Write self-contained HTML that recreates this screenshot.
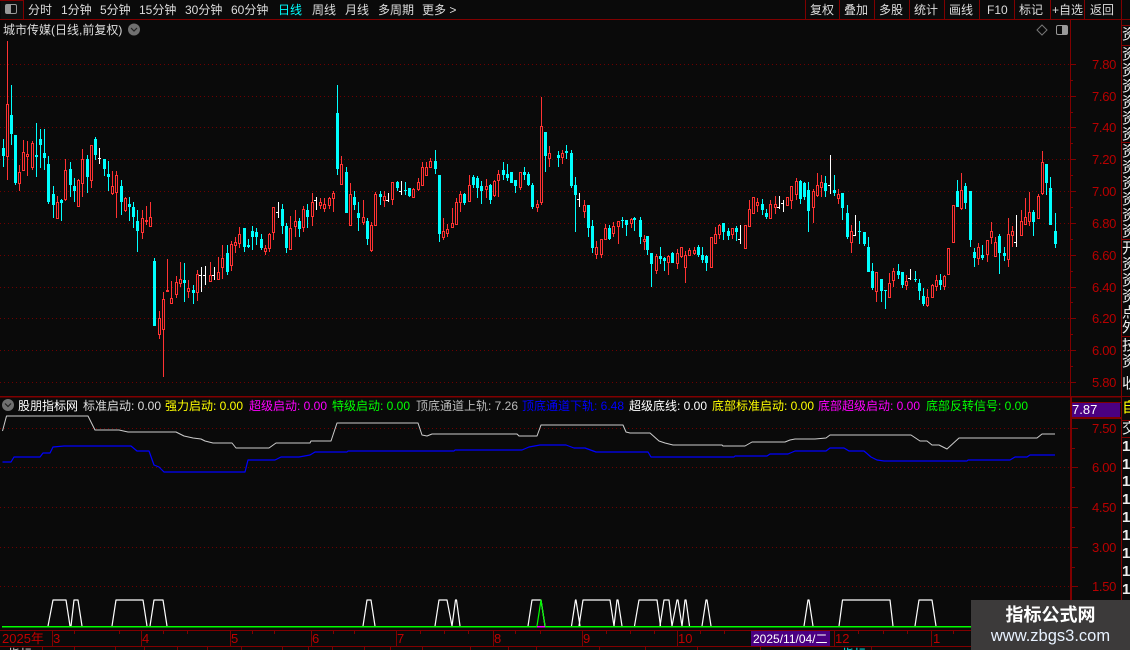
<!DOCTYPE html>
<html lang="zh-CN"><head><meta charset="utf-8"><title>城市传媒</title>
<style>
html,body{margin:0;padding:0;background:#0a0a0a}
#p{position:relative;width:1130px;height:650px;overflow:hidden;background:#0a0a0a;font:12px/14px "Liberation Sans","WenQuanYi Zen Hei","Noto Sans CJK SC",sans-serif;color:#ddd}
#p span{position:absolute;white-space:nowrap}
svg{position:absolute;left:0;top:0}
.n{top:3px;color:#ddd;font-size:12px}
.a{left:1092px;color:#b80000;font-size:13px;letter-spacing:-.3px}
.h{top:399px;font-size:12px}
.t{top:632px;color:#c00000;font-size:13px}
.s{left:1122px;color:#eee;font-size:15px;width:8px;overflow:hidden;height:16px;line-height:16px}
</style></head><body><div id="p">
<svg width="1130" height="650" viewBox="0 0 1130 650" shape-rendering="crispEdges" fill="none">
<g stroke="#6e0000" stroke-dasharray="1 3">
<path d="M0 64.5H1070M0 96.5H1070M0 127.5H1070M0 159.5H1070M0 191.5H1070M0 223.5H1070M0 255.5H1070M0 287.5H1070M0 318.5H1070M0 350.5H1070M0 382.5H1070M0 428.5H1070M0 467.5H1070M0 507.5H1070M0 547.5H1070M0 586.5H1070"/>
</g>
<path stroke="#0ff" d="M3.5 139V167M11.5 85V145M15.5 135V185M36.5 123V177M40.5 129V168M44.5 129V170M48.5 156V204M53.5 186V218M61.5 199V221M70.5 162V197M74.5 178V202M87.5 155V193M95.5 137V160M104.5 159V176M108.5 161V191M121.5 180V215M129.5 197V221M133.5 202V228M137.5 210V252M154.5 258V326M184.5 263V302M193.5 285V304M227.5 245V275M244.5 228V252M248.5 239V248M252.5 226V250M256.5 228V245M261.5 234V250M282.5 204V234M286.5 223V253M299.5 218V237M307.5 204V228M337.5 85V175M346.5 167V213M354.5 191V210M358.5 202V231M367.5 218V245M380.5 191V205M397.5 181V191M405.5 182V195M409.5 188V197M435.5 150V174M439.5 175V242M464.5 193V205M473.5 175V188M477.5 176V198M481.5 181V204M490.5 184V204M503.5 162V180M507.5 164V181M511.5 172V183M515.5 180V193M524.5 167V180M528.5 172V186M532.5 183V209M545.5 132V172M558.5 151V167M566.5 145V159M571.5 150V188M575.5 177V232M588.5 205V237M592.5 220V253M609.5 225V240M622.5 217V228M626.5 220V236M634.5 217V231M640.5 217V244M647.5 236V255M651.5 253V287M660.5 247V264M664.5 257V271M672.5 252V263M698.5 245V257M702.5 247V263M706.5 255V271M723.5 223V240M728.5 228V240M736.5 226V241M762.5 199V215M766.5 209V219M800.5 180V204M804.5 182V200M808.5 182V232M825.5 176V197M834.5 175V196M842.5 193V220M847.5 205V239M859.5 221V244M864.5 232V246M868.5 237V272M872.5 263V290M881.5 279V302M885.5 290V309M898.5 264V279M902.5 272V288M915.5 271V282M919.5 279V300M923.5 288V306M940.5 274V290M957.5 180V207M965.5 183V209M970.5 191V247M974.5 248V267M982.5 245V260M999.5 234V274M1004.5 247V261M1033.5 210V236M1046.5 164V195M1050.5 177V225M1055.5 213V248"/>
<path stroke="#0ff" stroke-width="3" d="M3.5 148V156M11.5 115V134M15.5 135V183M36.5 155V157M40.5 139V145M44.5 153V158M48.5 164V202M53.5 194V205M61.5 200V203M70.5 169V185M74.5 186V191M87.5 159V177M95.5 139V155M104.5 159V169M108.5 174V177M121.5 186V202M129.5 204V207M133.5 207V217M137.5 221V231M154.5 261V326M184.5 280V283M193.5 290V293M227.5 253V272M244.5 228V247M248.5 245V247M252.5 231V237M256.5 232V237M261.5 239V248M282.5 209V226M286.5 226V248M299.5 221V229M307.5 210V217M337.5 113V169M346.5 172V213M354.5 197V205M358.5 213V218M367.5 221V239M380.5 194V197M397.5 182V188M405.5 190V191M409.5 188V196M435.5 161V169M439.5 175V234M464.5 194V203M473.5 177V185M477.5 178V188M481.5 186V191M490.5 185V200M503.5 170V175M507.5 174V178M511.5 172V183M515.5 180V186M524.5 172V175M528.5 174V185M532.5 185V207M545.5 132V156M558.5 155V158M566.5 151V153M571.5 153V186M575.5 185V195M588.5 205V228M592.5 226V248M609.5 228V239M622.5 220V221M626.5 220V225M634.5 218V220M640.5 220V237M647.5 236V250M651.5 253V264M660.5 256V259M664.5 258V261M672.5 253V263M698.5 247V255M702.5 255V260M706.5 256V263M723.5 223V232M728.5 231V236M736.5 228V232M762.5 204V210M766.5 213V217M800.5 181V199M804.5 183V197M808.5 190V211M825.5 183V191M834.5 190V193M842.5 193V208M847.5 213V237M859.5 231V232M864.5 232V244M868.5 247V272M872.5 271V288M881.5 279V291M885.5 290V291M898.5 271V275M902.5 272V285M915.5 279V280M919.5 283V291M923.5 296V304M940.5 280V285M957.5 191V207M965.5 186V203M970.5 191V240M974.5 252V258M982.5 255V258M999.5 236V253M1004.5 253V256M1033.5 212V222M1046.5 164V183M1050.5 188V225M1055.5 231V244"/>
<path stroke="#ff3232" d="M7.5 41V180M19.5 165V191M23.5 140V170M27.5 141V176M32.5 141V170M57.5 196V218M65.5 159V201M78.5 179V207M82.5 149V197M91.5 145V188M112.5 171V195M116.5 171V218M125.5 197V212M142.5 210V239M146.5 206V225M150.5 202V226M159.5 311V339M163.5 292V377M167.5 259V291M171.5 281V304M176.5 276V298M180.5 262V287M188.5 280V298M197.5 270V301M210.5 262V282M218.5 257V280M222.5 245V279M231.5 241V271M235.5 237V253M239.5 227V248M265.5 245V255M269.5 233V252M273.5 207V240M290.5 216V250M295.5 210V237M303.5 206V232M312.5 193V226M320.5 198V209M324.5 198V212M329.5 197V209M333.5 191V212M341.5 156V184M350.5 183V225M363.5 200V225M371.5 222V252M375.5 192V225M384.5 191V207M392.5 182V205M413.5 188V198M418.5 178V191M422.5 162V186M426.5 162V175M430.5 158V167M443.5 218V240M447.5 224V237M452.5 208V227M456.5 198V225M460.5 191V212M469.5 175V202M486.5 179V198M494.5 180V197M498.5 170V197M520.5 172V190M537.5 200V212M541.5 97V205M549.5 146V167M562.5 150V164M584.5 200V218M596.5 241V259M601.5 239V258M605.5 224V240M613.5 222V237M618.5 221V244M631.5 218V228M644.5 235V250M656.5 254V274M668.5 255V275M677.5 249V269M681.5 247V258M685.5 251V283M689.5 248V256M694.5 247V255M711.5 237V267M715.5 227V243M719.5 224V239M732.5 228V239M745.5 225V248M749.5 200V226M753.5 197V213M757.5 198V212M770.5 200V219M775.5 196V214M787.5 197V205M791.5 186V209M796.5 178V200M813.5 189V223M817.5 173V197M821.5 175V197M838.5 189V204M851.5 225V253M876.5 272V302M889.5 273V298M893.5 268V287M906.5 275V290M927.5 289V307M932.5 284V298M936.5 275V291M944.5 275V290M948.5 248V274M953.5 205V242M961.5 173V210M978.5 243V265M987.5 240V262M991.5 222V244M995.5 237V257M1008.5 218V267M1012.5 226V247M1021.5 210V236M1025.5 198V224M1029.5 192V226M1038.5 194V218M1042.5 151V195"/>
<path stroke="#ff3232" fill="#0a0a0a" d="M6.5 104.5h2V156.5h-2zM18.5 172.5h2V183.5h-2zM22.5 152.5h2V170.5h-2zM26.5 154.5h2V156.5h-2zM31.5 143.5h2V167.5h-2zM56.5 202.5h2V218.5h-2zM64.5 170.5h2V199.5h-2zM77.5 180.5h2V206.5h-2zM81.5 159.5h2V183.5h-2zM90.5 145.5h2V180.5h-2zM111.5 186.5h2V193.5h-2zM115.5 175.5h2V192.5h-2zM124.5 198.5h2V210.5h-2zM141.5 218.5h2V232.5h-2zM145.5 220.5h2V221.5h-2zM149.5 217.5h2V226.5h-2zM158.5 318.5h2V334.5h-2zM162.5 299.5h2V329.5h-2zM166.5 290.5h2V291.5h-2zM170.5 298.5h2V303.5h-2zM175.5 282.5h2V294.5h-2zM179.5 279.5h2V283.5h-2zM187.5 288.5h2V291.5h-2zM196.5 274.5h2V292.5h-2zM209.5 275.5h2V281.5h-2zM217.5 272.5h2V279.5h-2zM221.5 258.5h2V267.5h-2zM230.5 244.5h2V265.5h-2zM234.5 242.5h2V245.5h-2zM238.5 234.5h2V243.5h-2zM264.5 248.5h2V251.5h-2zM268.5 234.5h2V248.5h-2zM272.5 207.5h2V232.5h-2zM289.5 228.5h2V249.5h-2zM294.5 221.5h2V226.5h-2zM302.5 209.5h2V227.5h-2zM311.5 202.5h2V216.5h-2zM319.5 202.5h2V205.5h-2zM323.5 204.5h2V208.5h-2zM328.5 198.5h2V205.5h-2zM332.5 193.5h2V198.5h-2zM340.5 164.5h2V184.5h-2zM349.5 194.5h2V225.5h-2zM362.5 217.5h2V222.5h-2zM370.5 225.5h2V250.5h-2zM374.5 194.5h2V225.5h-2zM383.5 196.5h2V200.5h-2zM391.5 182.5h2V199.5h-2zM412.5 189.5h2V197.5h-2zM417.5 182.5h2V189.5h-2zM421.5 167.5h2V185.5h-2zM425.5 167.5h2V175.5h-2zM429.5 161.5h2V167.5h-2zM442.5 231.5h2V237.5h-2zM446.5 229.5h2V233.5h-2zM451.5 223.5h2V227.5h-2zM455.5 202.5h2V224.5h-2zM459.5 194.5h2V202.5h-2zM468.5 185.5h2V201.5h-2zM485.5 186.5h2V189.5h-2zM493.5 181.5h2V195.5h-2zM497.5 174.5h2V180.5h-2zM519.5 172.5h2V187.5h-2zM536.5 204.5h2V207.5h-2zM540.5 126.5h2V202.5h-2zM548.5 153.5h2V158.5h-2zM561.5 153.5h2V157.5h-2zM583.5 205.5h2V211.5h-2zM595.5 247.5h2V254.5h-2zM600.5 239.5h2V254.5h-2zM604.5 228.5h2V239.5h-2zM612.5 226.5h2V233.5h-2zM617.5 221.5h2V226.5h-2zM630.5 219.5h2V223.5h-2zM643.5 239.5h2V241.5h-2zM655.5 256.5h2V270.5h-2zM667.5 256.5h2V262.5h-2zM676.5 253.5h2V263.5h-2zM680.5 247.5h2V256.5h-2zM684.5 255.5h2V267.5h-2zM688.5 250.5h2V255.5h-2zM693.5 250.5h2V253.5h-2zM710.5 237.5h2V267.5h-2zM714.5 234.5h2V243.5h-2zM718.5 225.5h2V234.5h-2zM731.5 228.5h2V234.5h-2zM744.5 225.5h2V248.5h-2zM748.5 209.5h2V226.5h-2zM752.5 197.5h2V213.5h-2zM756.5 202.5h2V205.5h-2zM769.5 204.5h2V218.5h-2zM774.5 204.5h2V207.5h-2zM786.5 197.5h2V205.5h-2zM790.5 186.5h2V200.5h-2zM795.5 181.5h2V194.5h-2zM812.5 191.5h2V207.5h-2zM816.5 185.5h2V195.5h-2zM820.5 182.5h2V187.5h-2zM837.5 194.5h2V198.5h-2zM850.5 231.5h2V242.5h-2zM875.5 272.5h2V291.5h-2zM888.5 283.5h2V297.5h-2zM892.5 271.5h2V280.5h-2zM905.5 281.5h2V285.5h-2zM926.5 297.5h2V305.5h-2zM931.5 285.5h2V297.5h-2zM935.5 280.5h2V286.5h-2zM943.5 276.5h2V286.5h-2zM947.5 248.5h2V274.5h-2zM952.5 205.5h2V242.5h-2zM960.5 190.5h2V208.5h-2zM977.5 247.5h2V258.5h-2zM986.5 240.5h2V254.5h-2zM990.5 231.5h2V237.5h-2zM994.5 242.5h2V256.5h-2zM1007.5 234.5h2V259.5h-2zM1011.5 231.5h2V235.5h-2zM1020.5 221.5h2V235.5h-2zM1024.5 217.5h2V224.5h-2zM1028.5 212.5h2V221.5h-2zM1037.5 196.5h2V218.5h-2zM1041.5 162.5h2V193.5h-2z"/>
<path stroke="#fff" d="M99.5 148V164M98 158.5h3M201.5 267V292M199 275.5h3M205.5 266V285M203 275.5h3M214.5 267V280M212 275.5h3M278.5 202V218M276 212.5h3M316.5 197V210M314 200.5h3M388.5 193V202M386 200.5h3M401.5 181V195M399 191.5h3M579.5 193V207M577 199.5h3M740.5 225V244M738 239.5h3M779.5 196V209M777 207.5h3M783.5 200V212M781 203.5h3M830.5 155V194M828 185.5h3M855.5 215V236M853 235.5h3M910.5 269V280M908 278.5h3M1016.5 215V247M1014 242.5h3"/>
<g shape-rendering="auto" stroke-linejoin="round">
<polyline stroke="#ccc" points="2.5,431 6.5,416 88,416 95,430 119,430 128,432 176,432 184,436 193,438 201,439 205,441 213,443 232,443 236,448 269,448 276,443 310,443 311,441 331,441 337,423 418,423 422,435 427,436 432,434 517,434 519,436 537,436 541,425 623,425 626,432 630,433 650,433 659,441 665,443 673,445 722,445 723,446 745,446 752,442 785,442 790,440 795,439 815,439 826,438 830,435 911,435 920,441 927,441 932,445 939,445 947,449 959,438 1037,438 1042,434 1055,434"/>
<polyline stroke="#0000ff" stroke-width="1.2" points="2.5,462 11,462 14,457 40,457 43,453 50,453 53,447 64,446 131,446 137,451 149,451 154,465 159,467 164,472 245,472 248,460 275,460 281,457 299,457 310,455 315,452 347,452 348,451 454,451 455,450 522,450 529,447 540,445 566,445 574,448 585,448 596,452 648,452 651,457 734,457 735,456 767,456 770,454 788,454 795,451 826,451 830,448 844,448 849,451 864,451 871,457 877,460 884,461 967,461 968,460 1010,460 1015,457 1027,457 1030,455 1055,455"/>
<polyline stroke="#fff" stroke-width="1.2" points="48,626 53,600 66,600 70,626"/>
<polyline stroke="#fff" stroke-width="1.2" points="71,626 74,600 78,600 82,626"/>
<polyline stroke="#fff" stroke-width="1.2" points="112,626 116,600 143,600 147,626"/>
<polyline stroke="#fff" stroke-width="1.2" points="150,626 154,600 163,600 167,626"/>
<polyline stroke="#fff" stroke-width="1.2" points="363,626 367,600 371,600 375,626"/>
<polyline stroke="#fff" stroke-width="1.2" points="435,626 439,600 447,600 452,626"/>
<polyline stroke="#fff" stroke-width="1.2" points="452,626 455.5,600 456.5,600 460,626"/>
<polyline stroke="#fff" stroke-width="1.2" points="528,626 532,600 541,600 545,626"/>
<polyline stroke="#00ff00" stroke-width="1.2" points="537,626 541,600 545,626"/>
<polyline stroke="#fff" stroke-width="1.2" points="571.5,626 575.5,600 576,600 580,626"/>
<polyline stroke="#fff" stroke-width="1.2" points="579,626 583,600 610,600 614,626"/>
<polyline stroke="#fff" stroke-width="1.2" points="614,626 617,600 618,600 622,626"/>
<polyline stroke="#fff" stroke-width="1.2" points="634.5,626 639,600 657,600 660.5,626"/>
<polyline stroke="#fff" stroke-width="1.2" points="660,626 664,600 669,600 672,626"/>
<polyline stroke="#fff" stroke-width="1.2" points="672,626 677,600 678,600 682,626"/>
<polyline stroke="#fff" stroke-width="1.2" points="682,626 685,600 686,600 689.5,626"/>
<polyline stroke="#fff" stroke-width="1.2" points="702,626 706,600 707,600 711,626"/>
<polyline stroke="#fff" stroke-width="1.2" points="804,626 808,600 809,600 813,626"/>
<polyline stroke="#fff" stroke-width="1.2" points="839,626 842.5,600 890,600 893,626"/>
<polyline stroke="#fff" stroke-width="1.2" points="915,626 919,600 932,600 936,626"/>
</g>
<rect x="2" y="626" width="1128" height="1.5" fill="#00ff00"/>
<rect x="537" y="626" width="8" height="1.5" fill="#ff00ff"/>
<g fill="#800000">
<rect x="0" y="19" width="1130" height="1"/>
<rect x="23" y="0" width="1" height="20"/><rect x="0" y="0" width="24" height="1"/>
<rect x="805" y="0" width="1" height="20"/><rect x="839" y="0" width="1" height="20"/><rect x="874" y="0" width="1" height="20"/><rect x="909" y="0" width="1" height="20"/><rect x="944" y="0" width="1" height="20"/><rect x="979" y="0" width="1" height="20"/><rect x="1014" y="0" width="1" height="20"/><rect x="1050" y="0" width="1" height="20"/><rect x="1084" y="0" width="1" height="20"/><rect x="1121" y="0" width="1" height="650"/>
<rect x="1070" y="20" width="1" height="377"/><rect x="1070" y="397" width="2" height="233"/>
<rect x="0" y="396" width="1121" height="1.5"/>
<rect x="1071" y="402" width="50" height="1"/><rect x="1071" y="417" width="50" height="2"/>
<rect x="1121" y="25" width="9" height="1"/><rect x="1121" y="45" width="9" height="1"/><rect x="1121" y="142" width="9" height="1"/><rect x="1121" y="239" width="9" height="1"/><rect x="1121" y="336" width="9" height="1"/><rect x="1121" y="396" width="9" height="1"/><rect x="1121" y="420" width="9" height="1"/><rect x="1121" y="437" width="9" height="1"/>
<rect x="0" y="630" width="1070" height="1"/><rect x="0" y="646" width="1070" height="1"/>
<path d="M1070 64h6v1h-6zM1070 96h6v1h-6zM1070 127h6v1h-6zM1070 159h6v1h-6zM1070 191h6v1h-6zM1070 223h6v1h-6zM1070 255h6v1h-6zM1070 287h6v1h-6zM1070 318h6v1h-6zM1070 350h6v1h-6zM1070 382h6v1h-6zM1070 80h3v1h-3zM1070 112h3v1h-3zM1070 143h3v1h-3zM1070 175h3v1h-3zM1070 207h3v1h-3zM1070 239h3v1h-3zM1070 271h3v1h-3zM1070 302h3v1h-3zM1070 334h3v1h-3zM1070 366h3v1h-3zM1072 428h6v1h-6zM1072 467h6v1h-6zM1072 507h6v1h-6zM1072 547h6v1h-6zM1072 586h6v1h-6zM1072 448h3v1h-3zM1072 487h3v1h-3zM1072 527h3v1h-3zM1072 567h3v1h-3zM1072 606h3v1h-3z"/>
<path d="M52 630h1v16h-1zM141 630h1v16h-1zM230 630h1v16h-1zM311 630h1v16h-1zM396 630h1v16h-1zM493 630h1v16h-1zM582 630h1v16h-1zM677 630h1v16h-1zM834 630h1v16h-1zM931 630h1v16h-1zM74 631h1v3h-1zM119 631h1v3h-1zM163 631h1v3h-1zM187 631h1v3h-1zM252 631h1v3h-1zM274 631h1v3h-1zM333 631h1v3h-1zM354 631h1v3h-1zM420 631h1v3h-1zM444 631h1v3h-1zM468 631h1v3h-1zM515 631h1v3h-1zM540 631h1v3h-1zM606 631h1v3h-1zM630 631h1v3h-1zM654 631h1v3h-1zM700 631h1v3h-1zM724 631h1v3h-1zM858 631h1v3h-1zM883 631h1v3h-1zM907 631h1v3h-1zM953 631h1v3h-1z"/>
<path d="M42 646h1v4h-1zM74 646h1v4h-1zM115 646h1v4h-1zM144 646h1v4h-1zM177 646h1v4h-1zM207 646h1v4h-1zM241 646h1v4h-1zM282 646h1v4h-1zM308 646h1v4h-1zM332 646h1v4h-1zM364 646h1v4h-1zM390 646h1v4h-1zM422 646h1v4h-1zM470 646h1v4h-1zM508 646h1v4h-1zM536 646h1v4h-1zM599 646h1v4h-1zM645 646h1v4h-1zM697 646h1v4h-1zM760 646h1v4h-1zM871 646h1v4h-1z"/>
</g>
<rect x="751" y="631" width="79" height="15" fill="#4b0082"/>
<rect x="1072" y="403" width="48" height="14" fill="#4b0082"/>
<rect x="1" y="1" width="22" height="18" fill="#0f0f0f"/>
<g shape-rendering="auto">
<rect x="5.5" y="4.5" width="11" height="9" rx="1.5" stroke="#999"/><rect x="6" y="5" width="5" height="8" fill="#999"/>
<circle cx="134" cy="29.5" r="6" fill="#707070"/><path d="M131 28l3 3 3-3" stroke="#222" stroke-width="1.2"/>
<path d="M1042 25l5 5-5 5-5-5z" stroke="#777"/>
<rect x="1056.5" y="25.5" width="11" height="9" rx="1.5" stroke="#999"/><rect x="1062" y="26" width="5" height="8" fill="#999"/>
<circle cx="8" cy="405" r="6" fill="#707070"/><path d="M5 403.5l3 3 3-3" stroke="#222" stroke-width="1.2"/>
</g>
<rect x="971" y="600" width="159" height="50" fill="#3c3a3a"/>
</svg>
<span class="n" style="left:28px">分时</span><span class="n" style="left:61px">1分钟</span><span class="n" style="left:100px">5分钟</span><span class="n" style="left:139px">15分钟</span><span class="n" style="left:185px">30分钟</span><span class="n" style="left:231px">60分钟</span><span class="n" style="left:278px;color:#0ff">日线</span><span class="n" style="left:312px">周线</span><span class="n" style="left:345px">月线</span><span class="n" style="left:378px">多周期</span><span class="n" style="left:422px">更多 &gt;</span>
<span class="n" style="left:810px">复权</span><span class="n" style="left:844px">叠加</span><span class="n" style="left:879px">多股</span><span class="n" style="left:914px">统计</span><span class="n" style="left:949px">画线</span><span class="n" style="left:987px">F10</span><span class="n" style="left:1019px">标记</span><span class="n" style="left:1052px">+自选</span><span class="n" style="left:1090px">返回</span>
<span style="left:3px;top:23px;color:#ddd">城市传媒(日线,前复权)</span>
<span class="a" style="top:58px">7.80</span><span class="a" style="top:90px">7.60</span><span class="a" style="top:121px">7.40</span><span class="a" style="top:153px">7.20</span><span class="a" style="top:185px">7.00</span><span class="a" style="top:217px">6.80</span><span class="a" style="top:249px">6.60</span><span class="a" style="top:281px">6.40</span><span class="a" style="top:312px">6.20</span><span class="a" style="top:344px">6.00</span><span class="a" style="top:376px">5.80</span>
<span class="a" style="top:422px">7.50</span><span class="a" style="top:461px">6.00</span><span class="a" style="top:501px">4.50</span><span class="a" style="top:541px">3.00</span><span class="a" style="top:580px">1.50</span>
<span style="left:1072px;top:403px;color:#fff;font-size:13px">7.87</span>
<span class="h" style="left:18px;color:#fff">股朋指标网</span><span class="h" style="left:83px;color:#ddd">标准启动: 0.00</span><span class="h" style="left:165px;color:#ff0">强力启动: 0.00</span><span class="h" style="left:249px;color:#f0f">超级启动: 0.00</span><span class="h" style="left:332px;color:#0f0">特级启动: 0.00</span><span class="h" style="left:416px;color:#bbb">顶底通道上轨: 7.26</span><span class="h" style="left:522px;color:#00f">顶底通道下轨: 6.48</span><span class="h" style="left:629px;color:#fff">超级底线: 0.00</span><span class="h" style="left:712px;color:#ff0">底部标准启动: 0.00</span><span class="h" style="left:818px;color:#f0f">底部超级启动: 0.00</span><span class="h" style="left:926px;color:#0f0">底部反转信号: 0.00</span>
<span class="t" style="left:2px">2025年</span><span class="t" style="left:53px">3</span><span class="t" style="left:142px">4</span><span class="t" style="left:231px">5</span><span class="t" style="left:312px">6</span><span class="t" style="left:397px">7</span><span class="t" style="left:494px">8</span><span class="t" style="left:583px">9</span><span class="t" style="left:678px">10</span><span class="t" style="left:753px;color:#fff;font-size:12px">2025/11/04/二</span><span class="t" style="left:835px">12</span><span class="t" style="left:933px">1</span>
<span class="s" style="top:27px">资</span><span class="s" style="top:47px">资</span><span class="s" style="top:63px">资</span><span class="s" style="top:79px">资</span><span class="s" style="top:95px">资</span><span class="s" style="top:111px">资</span><span class="s" style="top:127px">资</span><span class="s" style="top:144px">资</span><span class="s" style="top:160px">资</span><span class="s" style="top:176px">资</span><span class="s" style="top:192px">资</span><span class="s" style="top:208px">资</span><span class="s" style="top:224px">资</span><span class="s" style="top:241px">开</span><span class="s" style="top:257px">资</span><span class="s" style="top:273px">资</span><span class="s" style="top:289px">资</span><span class="s" style="top:305px">点</span><span class="s" style="top:320px">外</span><span class="s" style="top:338px">技</span><span class="s" style="top:354px">资</span><span class="s" style="top:376px">收</span>
<span class="s" style="top:400px;color:#ff0">自</span><span class="s" style="top:421px">交</span>
<span class="s" style="top:439px;font-weight:bold">1</span><span class="s" style="top:457px;font-weight:bold">1</span><span class="s" style="top:474px;font-weight:bold">1</span><span class="s" style="top:492px;font-weight:bold">1</span><span class="s" style="top:510px;font-weight:bold">1</span><span class="s" style="top:528px;font-weight:bold">1</span><span class="s" style="top:546px;font-weight:bold">1</span><span class="s" style="top:564px;font-weight:bold">1</span><span class="s" style="top:582px;font-weight:bold">1</span>
<span style="left:971px;top:605px;width:159px;text-align:center;color:#fff;font-size:18px;line-height:20px;font-weight:bold">指标公式网</span>
<span style="left:971px;top:628px;width:159px;text-align:center;color:#e8f2ff;font-size:16.5px;line-height:16px">www.zbgs3.com</span>
<span style="left:8px;top:647px;color:#ddd">指标</span><span style="left:842px;top:647px;color:#0ff">指标</span>
</div></body></html>
